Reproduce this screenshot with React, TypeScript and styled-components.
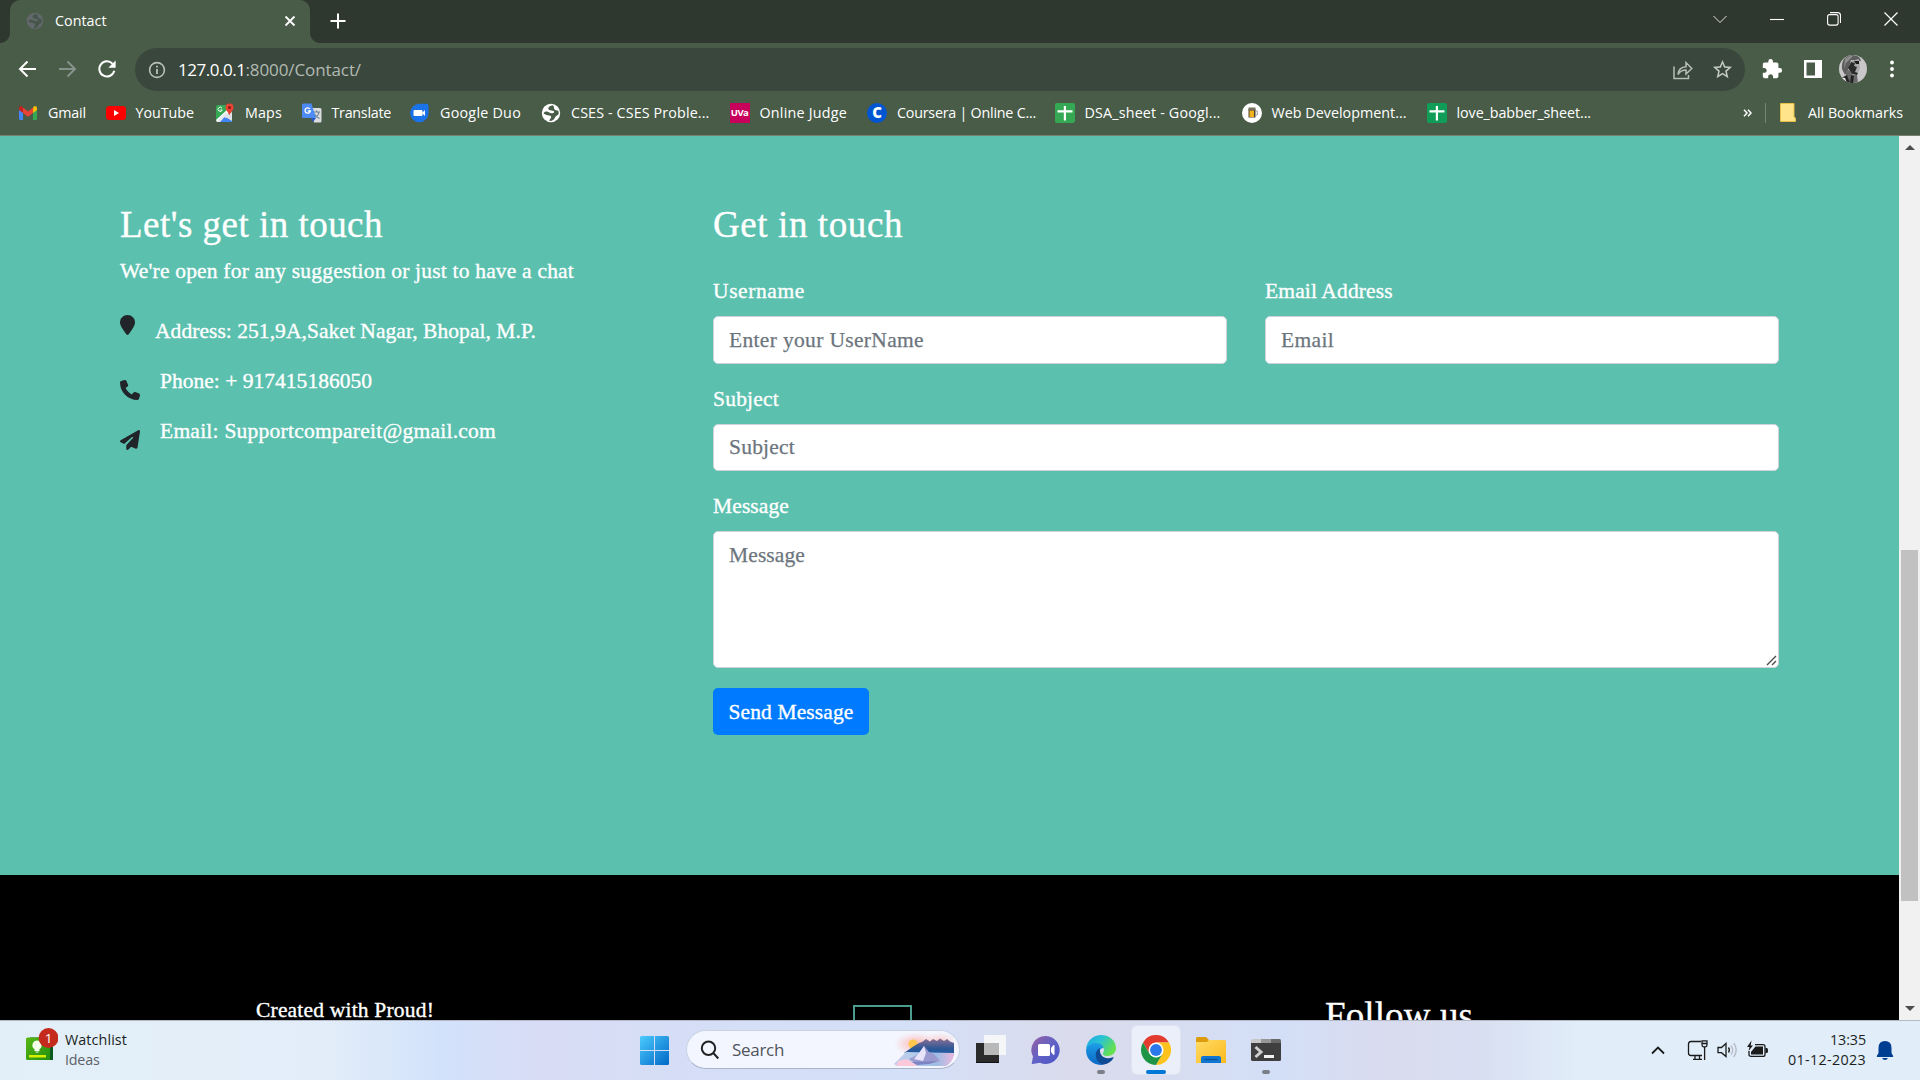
import React from 'react';
import styled, { createGlobalStyle } from 'styled-components';
import { FaLocationPin, FaPhone, FaPaperPlane } from 'react-icons/fa6';
import { MdStarBorder, MdExtension } from 'react-icons/md';

const UI = '"Open Sans", "Noto Sans", sans-serif';
const SERIF = '"Liberation Serif", serif';
const TEAL = '#5bc0ae';
const CHROME = '#495c48';

const Global = createGlobalStyle`
  * { box-sizing: border-box; }
  html, body { margin: 0; padding: 0; overflow: hidden; background: #000; }
  svg { display: block; flex: none; }
`;

/* Letter spacing that brings a run of text to a given width. */
const ctx = document.createElement('canvas').getContext('2d')!;
const spacing = (text: string, font: string, size: number, width: number) => {
  ctx.font = `${size}px ${font}`;
  return (width - ctx.measureText(text).width) / text.length;
};

const TextRun = styled.span<{ $size: number; $font: string; $color: string; $line: number }>`
  font-family: ${p => p.$font};
  font-size: ${p => p.$size}px;
  line-height: ${p => p.$line}px;
  color: ${p => p.$color};
  -webkit-text-stroke: ${p => (p.$font === SERIF ? '0.35px' : '0')} currentColor;
  white-space: pre;
  display: block;
`;

type RunProps = { children: string; w: number; size?: number; font?: string; color?: string; line?: number };
const Text = ({ children, w, size = 14.3, font = UI, color = '#fff', line = 20 }: RunProps) => (
  <TextRun
    $size={size}
    $font={font}
    $color={color}
    $line={line}
    style={{ letterSpacing: spacing(children, font, size, w) }}
  >
    {children}
  </TextRun>
);

const Screen = styled.div`
  width: 1920px;
  height: 1080px;
  display: flex;
  flex-direction: column;
  overflow: hidden;
`;

/* ---------- browser frame ---------- */
const TabStrip = styled.div`
  height: 43px;
  flex: none;
  background: #2f382f;
  display: flex;
`;
const Flare = styled.div<{ $side: 'left' | 'right' }>`
  width: 10px;
  background: radial-gradient(circle at ${p => (p.$side === 'left' ? '0' : '10px')} 33px, transparent 9.6px, ${CHROME} 10.2px) no-repeat 0 0;
  clip-path: inset(33px 0 0 0);
`;
const Tab = styled.div`
  width: 300px;
  background: ${CHROME};
  border-radius: 10px 10px 0 0;
  display: flex;
  align-items: center;
  padding: 0 14px 2px 16px;
  gap: 11px;
`;
const Grow = styled.div`
  flex: 1;
`;
const NewTab = styled.div`
  padding: 13px 0 0 10px;
`;
const WindowButtons = styled.div`
  display: flex;
  height: 37px;
  align-items: center;
  padding-right: 22px;
  gap: 43px;
`;
const Toolbar = styled.div`
  height: 53px;
  flex: none;
  background: ${CHROME};
  display: flex;
  align-items: center;
  padding: 0 20px 0 17px;
`;
const NavButtons = styled.div`
  display: flex;
  width: 118px;
  gap: 19px;
  align-items: center;
  padding-bottom: 2px;
`;
const UrlBar = styled.div`
  width: 1610px;
  height: 43px;
  border-radius: 22px;
  background: #3a473c;
  display: flex;
  align-items: center;
  padding: 0 9px 0 13px;
`;
const UrlText = styled.div`
  display: flex;
  padding-left: 12px;
`;
const ToolIcons = styled.div`
  display: flex;
  align-items: center;
  padding-left: 16px;
  padding-bottom: 1px;
`;
const Slot = styled.div<{ $w: number }>`
  width: ${p => p.$w}px;
  display: flex;
`;
const Bookmarks = styled.div`
  height: 40px;
  flex: none;
  background: ${CHROME};
  border-bottom: 1px solid #75806f;
  display: flex;
  padding-left: 18px;
  padding-bottom: 6px;
  align-items: center;
`;
const Bookmark = styled.div<{ $w: number }>`
  width: ${p => p.$w}px;
  display: flex;
  align-items: center;
  gap: 10px;
`;
const Divider = styled.div`
  width: 1px;
  height: 20px;
  background: #75866f;
  margin: 0 14px 0 13px;
`;
const UvaBadge = styled.div`
  width: 20px;
  height: 20px;
  background: #c8005c;
  color: #fff;
  font: bold 9.5px/20px ${UI};
  letter-spacing: -0.5px;
  text-align: center;
`;
const CourseraBadge = styled.div`
  width: 20px;
  height: 20px;
  border-radius: 50%;
  background: #0056d2;
  color: #fff;
  font: 800 15px/19px ${UI};
  text-align: center;
`;

/* ---------- page ---------- */
const Viewport = styled.div`
  height: 884px;
  flex: none;
  display: flex;
  overflow: hidden;
`;
const Page = styled.div`
  width: 1899px;
  height: 884px;
  overflow: hidden;
`;
const ContactSection = styled.section`
  height: 739px;
  background: ${TEAL};
  display: flex;
  padding: 68px 120px 0 120px;
`;
const Info = styled.div`
  width: 593px;
`;
const Heading = styled.div`
  height: 42px;
  margin-bottom: 10px;
`;
const InfoRow = styled.div<{ $gap: number; $drop: number }>`
  height: 50px;
  display: flex;
  align-items: flex-start;
  gap: ${p => p.$gap}px;
  color: #212529;
  > svg { margin-top: ${p => p.$drop}px; }
`;
const Intro = styled.div`
  margin-bottom: 30px;
`;
const Form = styled.form`
  flex: 1;
  display: flex;
  flex-direction: column;
  gap: 20px;
`;
const Pair = styled.div`
  display: grid;
  grid-template-columns: 1fr 1fr;
  gap: 38px;
`;
const Group = styled.label`
  display: flex;
  flex-direction: column;
  gap: 10px;
  position: relative;
`;
const fieldCss = `
  width: 100%;
  border: 1px solid #ced4da;
  border-radius: 5px;
  background: #fff;
  font: 21.5px/30px ${SERIF};
  padding: 8px 15px;
  outline: none;
  display: block;
  &::placeholder { color: #6c757d; opacity: 1; -webkit-text-stroke: 0.25px #6c757d; }
`;
const Input = styled.input<{ $nudge?: number }>`
  ${fieldCss}
  height: 47.5px;
  padding-top: ${p => 8 + (p.$nudge || 0)}px;
`;
const Area = styled.textarea`
  ${fieldCss}
  height: 137px;
  resize: none;
`;
const Grip = styled.svg`
  position: absolute;
  right: 1px;
  bottom: 1px;
`;
const Submit = styled.button`
  align-self: flex-start;
  width: 156px;
  height: 47px;
  border: 0;
  border-radius: 5px;
  background: #007bff;
  padding: 0;
  display: flex;
  align-items: center;
  justify-content: center;
`;
const Footer = styled.footer`
  height: 145px;
  background: #000;
  display: flex;
  align-items: flex-start;
`;
const FootCell = styled.div<{ $left: number; $top: number; $w: number }>`
  margin-left: ${p => p.$left}px;
  padding-top: ${p => p.$top}px;
  width: ${p => p.$w}px;
`;
const Frame = styled.div`
  height: 60px;
  border: 2px solid #4a9c8d;
`;
const Scrollbar = styled.div`
  width: 21px;
  background: #f1f1f1;
  display: flex;
  flex-direction: column;
  align-items: center;
`;
const Arrow = styled.div<{ $up?: boolean }>`
  width: 0;
  height: 0;
  border-left: 5px solid transparent;
  border-right: 5px solid transparent;
  ${p => (p.$up ? 'border-bottom' : 'border-top')}: 5px solid #4d4d4d;
  margin-top: ${p => (p.$up ? 9 : 105)}px;
`;
const Thumb = styled.div`
  margin-top: 400px;
  width: 17px;
  height: 351px;
  background: #c1c1c1;
`;

/* ---------- taskbar ---------- */
const Taskbar = styled.div`
  height: 60px;
  flex: none;
  border-top: 1px solid #b3bac6;
  background: linear-gradient(90deg, #e3eff8 0, #e2edf9 330px, #d3e2fb 440px, #d8dcf5 540px, #d5def6 680px, #d4e0f8 900px, #dadbec 1080px, #d3dff7 1280px, #d9dbee 1390px, #d8dff1 1480px, #e1edf9 1580px, #e1edf8 1920px);
  display: flex;
`;
const Widgets = styled.div`
  width: 640px;
  display: flex;
  padding: 5px 0 0 26px;
`;
const WidgetIcon = styled.div`
  width: 39px;
`;
const Lines = styled.div<{ $end?: boolean }>`
  display: flex;
  flex-direction: column;
  padding-top: ${p => (p.$end ? 9 : 4)}px;
  align-items: ${p => (p.$end ? 'flex-end' : 'flex-start')};
`;
const Dock = styled.div`
  display: flex;
  width: 1009px;
`;
const StartSlot = styled.div`
  width: 46px;
  padding-top: 15px;
`;
const Search = styled.div`
  width: 274px;
  height: 39px;
  margin: 9px 7px 0 0;
  border-radius: 20px;
  background: #f3f6fe;
  border: 1px solid #c9d3e6;
  border-bottom-color: #aab4c8;
  display: flex;
  align-items: center;
  gap: 12px;
  padding-left: 13px;
`;
const SearchArt = styled.div`
  margin-left: 98px;
`;
const DockApp = styled.div<{ $active?: boolean }>`
  width: 48px;
  height: 48px;
  margin: 5px 7px 0 0;
  border-radius: 5px;
  flex: none;
  display: flex;
  flex-direction: column;
  align-items: center;
  justify-content: flex-end;
  background: ${p => (p.$active ? '#ebeff9' : 'transparent')};
  box-shadow: ${p => (p.$active ? '0 0 0 1px #dfe3ef' : 'none')};
`;
const Mark = styled.div<{ $w: number; $c: string }>`
  width: ${p => p.$w}px;
  height: 4px;
  border-radius: 2px;
  margin-top: 5px;
  background: ${p => p.$c};
`;
const Tray = styled.div`
  flex: 1;
  display: flex;
`;
const TrayIcons = styled.div`
  width: 130px;
  display: flex;
  padding-top: 19px;
`;
const Clock = styled.div`
  width: 87px;
`;
const Bell = styled.div`
  padding: 19px 0 0 10px;
`;

/* ---------- drawings ---------- */
const Globe = ({ bg, fg, size = 18 }: { bg: string; fg: string; size?: number }) => (
  <svg width={size} height={size} viewBox="0 0 20 20">
    <circle cx="10" cy="10" r="9.2" fill={bg} />
    <path d="M12 2.200C9 2.500 7 4 7.300 5.800 7.700 7.500 10 7.500 12 7.800c1.700.3 1.600 2-.3 2.400-1.700.3-3-.6-4.500-1.200C5.500 8.200 3.500 8.400 2.500 10.500L5.500 12c1.500.6 4 0 4.600 1.500.6 1.700-1.600 2.200-1.700 4.500 2.600.3 4.600-1 5.600-3.400.6-1.500 2.500-2 3.500-3.300.4-1.300.3-2.600-.3-3.600-1.500-.4-3.300-.2-4-1.600C12.700 5 13.500 3.800 12 2.200Z" fill={fg} />
  </svg>
);
const Gmail = () => (
  <svg width="20" height="20" viewBox="0 0 20 20">
    <path d="M1 5v10.500q0 1.500 1.500 1.500H5V8Z" fill="#4285f4" />
    <path d="M19 5v10.500q0 1.500-1.500 1.500H15V8Z" fill="#34a853" />
    <path d="M15 5.200V10l4-3V5.300C19 3 17 2.500 15.600 3.600Z" fill="#fbbc04" />
    <path d="M5 5.200V10L1 7V5.300C1 3 3 2.500 4.400 3.600Z" fill="#c5221f" />
    <path d="M5 10V4.600l5 3.800 5-3.800V10l-5 3.800Z" fill="#ea4335" />
  </svg>
);
const YouTube = () => (
  <svg width="20" height="20" viewBox="0 0 20 20">
    <rect x="0" y="3" width="20" height="14" rx="3.500" fill="#f00" />
    <path d="m8 7 5 3-5 3Z" fill="#fff" />
  </svg>
);
const Maps = () => (
  <svg width="20" height="20" viewBox="0 0 20 20">
    <rect x="1" y="2" width="16" height="17" rx="2" fill="#34a853" />
    <path d="m2 19 8-8 7 7v1Z" fill="#4285f4" />
    <path d="M1 17 14 5l3 2L4 19H2Z" fill="#fff" />
    <path d="M1.500 18 11 9l3 3-7 7H3Z" fill="#e8eaed" />
    <path d="m9 13 8-4v9Z" fill="#dfe3e8" />
    <path d="m5 19 4.500-5 5.500 5Z" fill="#4285f4" />
    <path d="M7 5.200A2.100 2.100 0 1 0 7.200 7H5.300" stroke="#fff" strokeWidth="1" fill="none" />
    <path d="M14.500.5a4 4 0 0 0-4 4c0 3 3 4.500 4 8 1-3.500 4-5 4-8a4 4 0 0 0-4-4Z" fill="#ea4335" />
    <circle cx="14.500" cy="4.500" r="1.500" fill="#811c14" />
  </svg>
);
const Translate = () => (
  <svg width="20" height="20" viewBox="0 0 20 20">
    <path d="M8 5h10q1.500 0 1.500 1.500V18q0 1.500-1.500 1.500h-6Z" fill="#dadce0" />
    <path d="M11 9h7M14.500 7.500V9M17 9c-.5 3-2.500 5-5 6M12.500 11c1 2 2.500 3.500 5 4.500" stroke="#6b7f8e" strokeWidth="1.100" fill="none" />
    <path d="M1.500.5h8L14 15H1.500Q0 15 0 13.500V2Q0 .5 1.500.5Z" fill="#4c8bf5" />
    <path d="m9 15 5 0-3 4Z" fill="#2a56c6" />
    <path d="M8 6A2.700 2.700 0 1 0 8.400 8H5.800" stroke="#fff" strokeWidth="1.300" fill="none" />
  </svg>
);
const Duo = () => (
  <svg width="20" height="20" viewBox="0 0 20 20">
    <path d="M9.500.8h7q2 0 2 2V10a9.200 9.200 0 1 1-9-9.200Z" fill="#1a73e8" />
    <path d="M4.500 7h7q1 0 1 1v4q0 1-1 1h-7q-1 0-1-1V8q0-1 1-1Zm8 2.500L15 7v6l-2.500-2.500Z" fill="#fff" />
  </svg>
);
const Sheet = ({ c }: { c: string }) => (
  <svg width="20" height="20" viewBox="0 0 20 20">
    <rect width="20" height="20" rx="2" fill={c} />
    <path d="M9.900 3v14.500M2.500 8.300h15" stroke="#fff" strokeWidth="2.200" />
  </svg>
);
const Beer = () => (
  <svg width="20" height="20" viewBox="0 0 20 20">
    <circle cx="10" cy="10" r="10" fill="#fff" />
    <path d="M6.500 6h7v8.500h-7Z" fill="#4b4030" />
    <path d="M7.500 7.500h4.500v6.500H7.500Z" fill="#f2b21b" />
    <path d="M6.500 4.500h7v2.800h-7Z" fill="#77705f" />
    <path d="M13.500 8h1.800v4h-1.800" stroke="#999" fill="none" />
  </svg>
);
const Line = ({ d, w = 20, h = 20, c = '#fff', s = 2 }: { d: string; w?: number; h?: number; c?: string; s?: number }) => (
  <svg width={w} height={h} viewBox={`0 0 ${w} ${h}`} fill="none" stroke={c} strokeWidth={s}>
    <path d={d} />
  </svg>
);
const Avatar = () => (
  <svg width="28" height="28" viewBox="0 0 28 28">
    <clipPath id="av"><circle cx="14" cy="14" r="14" /></clipPath>
    <g clipPath="url(#av)">
      <path d="M0 0h28v28H0Z" fill="#c9c7c9" />
      <path d="M3 14Q2 1 13 0q8 0 9 6L12 5 9 15l-3 5Z" fill="#5d5d5d" />
      <path d="M12 6 20 4l1 9-2 5-6 1-3-5Z" fill="#a9a9a9" />
      <path d="m12 7 4 1-1 3 3 1-2 5 3 1-1 2-5-1-4-6Z" fill="#2b2b2b" />
      <path d="M15 6h5v3h-3Z" fill="#1c1c1c" />
      <path d="M7 16 10 15l4 5 4 0 1 8H7Z" fill="#6a6a6a" />
      <path d="m12 20 3 1-1 7h-3ZM0 24l8-4 3 8H0Z" fill="#242424" />
      <path d="m0 22 6 1 2 5H0Z" fill="#efefef" />
      <path d="M6 4q4-4 8-3L7 8 5 14Z" fill="#8d8d8d" />
    </g>
  </svg>
);
const WatchIcon = () => (
  <svg width="32" height="38" viewBox="0 0 32 38">
    <defs>
      <linearGradient id="wg" x2="1" y2="1"><stop stopColor="#58b811" /><stop offset="1" stopColor="#218f12" /></linearGradient>
    </defs>
    <path d="M4 11.500h23V34H4Z" fill="#0b5a1f" />
    <path d="M1.500 11.500H24V34H1.500Q0 34 0 32.500V13q0-1.500 1.500-1.500Z" fill="url(#wg)" />
    <path d="M3 29h17v2.500H3Z" fill="#d4f000" />
    <path d="M11 14.500a4.700 4.700 0 0 0-2.500 8.600V25h5v-1.900A4.700 4.700 0 0 0 11 14.500Z" fill="#f4ffe9" />
    <path d="M9.500 26h3.200" stroke="#f4ffe9" />
    <circle cx="22.500" cy="12" r="9.900" fill="#c42b1c" />
    <text x="22.500" y="17" textAnchor="middle" fontFamily="Open Sans, sans-serif" fontSize="13.500" fill="#fff">1</text>
  </svg>
);
const StartIcon = () => (
  <svg width="30" height="30" viewBox="0 0 30 30">
    <defs><linearGradient id="win" x2="1" y2="1"><stop stopColor="#4ccbff" /><stop offset="1" stopColor="#0067c5" /></linearGradient></defs>
    <path d="M1.500 0H14v14H0V1.500Q0 0 1.500 0ZM15 0h12.500Q29 0 29 1.500V14H15ZM0 15h14v14H1.500Q0 29 0 27.500ZM15 15h14v12.500q0 1.500-1.500 1.500H15Z" fill="url(#win)" />
  </svg>
);
const Art = () => (
  <svg width="61" height="36" viewBox="0 0 61 36">
    <defs>
      <linearGradient id="mt" x2="0" y2="1"><stop stopColor="#8c6f92" /><stop offset=".6" stopColor="#2c5796" /><stop offset="1" stopColor="#1e5fa8" /></linearGradient>
      <linearGradient id="wt" x2="1"><stop stopColor="#c8c9ec" /><stop offset=".3" stopColor="#b4cdea" /><stop offset=".7" stopColor="#9dbde4" /><stop offset="1" stopColor="#efb8de" /></linearGradient>
      <radialGradient id="gl"><stop stopColor="#ffb09a" /><stop offset="1" stopColor="#ffc3d0" stopOpacity="0" /></radialGradient>
      <clipPath id="ac"><path d="M0 0h60v22q-1 8-8 12H0Z" /></clipPath>
    </defs>
    <g clipPath="url(#ac)">
      <ellipse cx="22" cy="12" rx="22" ry="12" fill="url(#gl)" />
      <ellipse cx="46" cy="9" rx="18" ry="9" fill="url(#gl)" opacity=".6" />
      <circle cx="19" cy="12" r="4.500" fill="#ffc84c" />
      <path d="M10 21 20 14l5-3 3-1 4-3 4 2.500 3-2.500 4 2 3-2.500 4 2.500 3-2 3 2.500 5 2v12Z" fill="url(#mt)" />
      <path d="M0 32 12 20l49 1v15H6Z" fill="url(#wt)" />
      <path d="m4 29 9-2 12 8H2Z" fill="#fbc9da" />
      <path d="m15 27 8-4 3-2 4-7 5 6 5 2 6 7-10 3H22Z" fill="#9c9bcf" />
      <path d="m25 21 5-7 2 7-3 8-9-2Z" fill="#e8e5fa" />
      <path d="m18 30 25-1-8 3-12 1Z" fill="#7d84c2" />
    </g>
  </svg>
);
const TaskView = () => (
  <svg width="30" height="30" viewBox="0 0 30 30">
    <path d="M0 8h23v20H0Z" fill="#2b2b2b" />
    <path d="M0 27h23v1H0Z" fill="#111" />
    <path d="M8 0h22v20H8Z" fill="#f7f7f7" fillOpacity=".95" />
    <path d="M8 8h15v12H8Z" fill="#b9b9b9" />
  </svg>
);
const Chat = () => (
  <svg width="30" height="30" viewBox="0 0 30 30">
    <defs><linearGradient id="ch" x1="0" x2="1" y2="1"><stop stopColor="#9a5f9f" /><stop offset=".5" stopColor="#6162c6" /><stop offset="1" stopColor="#4c55c4" /></linearGradient></defs>
    <path d="M15 1a14 14 0 1 1-6 26.800L1.500 29q-1 0-.7-1L2 21.500A14 14 0 0 1 15 1Z" fill="url(#ch)" />
    <rect x="7" y="9" width="12" height="12" rx="1.500" fill="#fff" />
    <path d="m20 13 2-2.500q1.500-1 1.500.5v8q0 1.500-1.500.5L20 17Z" fill="#fff" />
  </svg>
);
const Edge = () => (
  <svg width="30" height="30" viewBox="0 0 30 30">
    <defs>
      <linearGradient id="e1" x2="1" y2=".5"><stop stopColor="#1ca7e8" /><stop offset=".5" stopColor="#2bc3d2" /><stop offset="1" stopColor="#66e04e" /></linearGradient>
      <linearGradient id="e2" x2="0" y2="1"><stop stopColor="#1ea0e8" /><stop offset="1" stopColor="#0b66c4" /></linearGradient>
    </defs>
    <path d="M0 14C1 5 8 0 15 0c9 0 15 6 15 13 0 5-4 8-8.500 8-3.500 0-5.500-1.500-4.500-3 3-4-1-8.500-6-9C6 9 2 11 0 14Z" fill="url(#e1)" />
    <path d="M0 15c1-5 6-7 10-7 4.500 0 7.500 3 7.500 5-6 0-8 12 .5 16.500-9 2-18-4-18-14.500Z" fill="url(#e2)" />
    <path d="M14 13c-7 3-5 15 4 16.600 4-.8 7.500-3 9.500-6.600.4-.8-.2-1-.8-.7-7 3-14-1-12.700-9.300Z" fill="#0f4a94" />
  </svg>
);
const ChromeLogo = () => (
  <svg width="30" height="30" viewBox="0 0 30 30">
    <path d="M2 7.500A15 15 0 0 1 28 7.500H15L8.500 18.700Z" fill="#e33b2e" />
    <path d="M28 7.500A15 15 0 0 1 14.900 30L21.500 18.700 21 11 15 7.500Z" fill="#fcc31e" />
    <path d="M2 7.500A15 15 0 0 0 14.900 30l6.600-11.300L15 22.500l-6.500-3.800Z" fill="#1f9447" />
    <circle cx="15" cy="15" r="7.500" fill="#fff" />
    <circle cx="15" cy="15" r="5.900" fill="#2a78e9" />
  </svg>
);
const Folder = () => (
  <svg width="30" height="30" viewBox="0 0 30 30">
    <defs><linearGradient id="fo" x2="1" y2="1"><stop stopColor="#ffdc66" /><stop offset="1" stopColor="#fcb91d" /></linearGradient></defs>
    <path d="M1.500 2H10l3 3-2 4H0V3.500Q0 2 1.500 2Z" fill="#dd9c0b" />
    <path d="M0 7h11l2-2h15.500Q30 5 30 6.500V28H0Z" fill="url(#fo)" />
    <path d="M5 28v-5q0-2 2-2h16q2 0 2 2v5Z" fill="#1076cf" />
    <path d="M8.500 24.500h13" stroke="#0a4f9a" strokeWidth="1.200" />
  </svg>
);
const Terminal = () => (
  <svg width="30" height="30" viewBox="0 0 30 30">
    <path d="M0 8h30v16.500q0 1.500-1.500 1.500h-27Q0 26 0 24.500Z" fill="#3f3f3f" />
    <path d="M0 8V5.500Q0 4 1.500 4H10v4Z" fill="#c8c8c8" />
    <path d="M10 4h10v4H10Z" fill="#979797" />
    <path d="M20 4h8.500Q30 4 30 5.500V8H20Z" fill="#686868" />
    <path d="m4.500 12 5.500 5-5.500 5" stroke="#cfcfcf" strokeWidth="3" fill="none" />
    <path d="M13 21.500h10" stroke="#f2f2f2" strokeWidth="3" />
  </svg>
);

const bookmarks: [React.ReactNode, string, number, number][] = [
  [<Gmail />, 'Gmail', 38, 87.5],
  [<YouTube />, 'YouTube', 58.5, 109.5],
  [<Maps />, 'Maps', 37, 86.5],
  [<Translate />, 'Translate', 59.5, 108.5],
  [<Duo />, 'Google Duo', 81, 131],
  [<Globe bg="#fff" fg={CHROME} size={20} />, 'CSES - CSES Proble...', 138.5, 188.5],
  [<UvaBadge>UVa</UvaBadge>, 'Online Judge', 87.5, 137.5],
  [<CourseraBadge>C</CourseraBadge>, 'Coursera | Online C...', 139, 187.5],
  [<Sheet c="#34a853" />, 'DSA_sheet - Googl...', 136, 187],
  [<Beer />, 'Web Development...', 135, 185],
  [<Sheet c="#0f9d58" />, 'love_babber_sheet...', 134.5, 299],
];

const Serif = (p: RunProps) => <Text size={21.5} font={SERIF} line={30} {...p} />;
const Title = (p: RunProps) => <Text size={37} font={SERIF} line={42} {...p} />;
const ph = (t: string, w: number) => ({ placeholder: t, style: { letterSpacing: spacing(t, SERIF, 21.5, w) } });

export default function App() {
  return (
    <Screen>
      <Global />
      <TabStrip>
        <Flare $side="left" />
        <Tab>
          <Globe bg="#62676b" fg="#46564a" />
          <Text w={51.5}>Contact</Text>
          <Grow />
          <Line w={12} h={12} d="m1.500 1.500 9 9m0-9-9 9" s={1.800} />
        </Tab>
        <Flare $side="right" />
        <NewTab><Line w={16} h={16} d="M8 .5v15M.5 8h15" s={2} /></NewTab>
        <Grow />
        <WindowButtons>
          <Line w={14} h={14} d="m.5 4 6.500 6.500L13.500 4" s={1} c="#dfe3df" />
          <Line w={14} h={14} d="M0 7.500h14" s={1.100} />
          <svg width="14" height="14" viewBox="0 0 14 14" fill="none" stroke="#fff" strokeWidth="1.100">
            <rect x=".6" y="2.600" width="10.500" height="10.500" rx="2" />
            <path d="M3 .6h7.500q3 0 3 3V11" />
          </svg>
          <Line w={14} h={14} d="m.5.5 13 13m0-13-13 13" s={1.200} />
        </WindowButtons>
      </TabStrip>
      <Toolbar>
        <NavButtons>
          <Line w={21} h={20} d="M19 10H3.500M10.500 2.500 3 10l7.500 7.500" />
          <Line w={21} h={20} d="M2 10h15.500M10.500 2.500 18 10l-7.500 7.500" c="#87938a" />
          <svg width="20" height="20" viewBox="0 0 20 20">
            <path d="M17.300 11.800A7.600 7.600 0 1 1 15.600 4.800" fill="none" stroke="#fff" strokeWidth="2" />
            <path d="M18.600 1.500v7.300h-7.300Z" fill="#fff" />
          </svg>
        </NavButtons>
        <UrlBar>
          <svg width="18" height="18" viewBox="0 0 18 18" fill="none" stroke="#b9c0ba">
            <circle cx="9" cy="9" r="7.400" strokeWidth="1.600" />
            <path d="M9 8v5M9 4.800v1.800" strokeWidth="1.800" />
          </svg>
          <UrlText>
            <Text w={67.5} size={17} line={24}>127.0.0.1</Text>
            <Text w={115.5} size={17} line={24} color="#b3bab3">:8000/Contact/</Text>
          </UrlText>
          <Grow />
          <Slot $w={38}>
            <svg width="20" height="20" viewBox="0 0 20 20" fill="none" stroke="#b5bdb6" strokeWidth="1.500">
              <path d="M1 6.500V18.500H15.500V15" />
              <path d="M5 14.500c.5-5 3.500-7.500 8-7.700V2.500L18.800 8.500 13 14v-4c-3.500 0-6 1.200-8 4.500Z" />
            </svg>
          </Slot>
          <Slot $w={25}><MdStarBorder size={23} color="#c3c9c3" /></Slot>
        </UrlBar>
        <ToolIcons>
          <Slot $w={43}><MdExtension size={22} color="#fff" /></Slot>
          <Slot $w={35}>
            <svg width="18" height="18" viewBox="0 0 18 18">
              <path fillRule="evenodd" d="M0 0h18v18H0ZM2.500 2.500v13H11v-13Z" fill="#fff" />
            </svg>
          </Slot>
          <Slot $w={50}><Avatar /></Slot>
          <svg width="6" height="18" viewBox="0 0 6 18" fill="#fff">
            <circle cx="3" cy="2.500" r="1.900" /><circle cx="3" cy="9" r="1.900" /><circle cx="3" cy="15.500" r="1.900" />
          </svg>
        </ToolIcons>
      </Toolbar>
      <Bookmarks>
        {bookmarks.map(([icon, label, w, cell]) => (
          <Bookmark key={label} $w={cell}>{icon}<Text w={w}>{label}</Text></Bookmark>
        ))}
        <Grow />
        <Line w={9} h={8} d="m1 .7 3 3.300-3 3.300M5 .7l3 3.300-3 3.300" s={1.500} />
        <Divider />
        <Bookmark $w={140}>
          <svg width="18" height="19" viewBox="0 0 18 19">
            <path d="M.5.5H14V14l1.500 1v3.500H.5Z" fill="#ffe48c" stroke="#e8bf45" />
          </svg>
          <Text w={95}>All Bookmarks</Text>
        </Bookmark>
      </Bookmarks>

      <Viewport>
        <Page>
          <ContactSection>
            <Info>
              <Heading><Title w={263}>Let's get in touch</Title></Heading>
              <Intro><Serif w={454}>We're open for any suggestion or just to have a chat</Serif></Intro>
              <InfoRow $gap={20} $drop={-1}>
                <FaLocationPin style={{ width: 15, height: 20 }} />
                <Serif w={381}>Address: 251,9A,Saket Nagar, Bhopal, M.P.</Serif>
              </InfoRow>
              <InfoRow $gap={20} $drop={14}>
                <FaPhone size={20} />
                <Serif w={212}>Phone: + 917415186050</Serif>
              </InfoRow>
              <InfoRow $gap={20} $drop={14}>
                <FaPaperPlane size={20} />
                <Serif w={336}>Email: Supportcompareit@gmail.com</Serif>
              </InfoRow>
            </Info>
            <Form>
              <Heading><Title w={190}>Get in touch</Title></Heading>
              <Pair>
                <Group><Serif w={92}>Username</Serif><Input $nudge={1} {...ph('Enter your UserName', 195)} /></Group>
                <Group><Serif w={129}>Email Address</Serif><Input $nudge={1} {...ph('Email', 53)} /></Group>
              </Pair>
              <Group><Serif w={66}>Subject</Serif><Input {...ph('Subject', 66)} /></Group>
              <Group>
                <Serif w={76}>Message</Serif>
                <Area {...ph('Message', 76)} />
                <Grip width="12" height="12" viewBox="0 0 12 12" stroke="#4a4a4a" strokeWidth="1.400">
                  <path d="m1 10 9-9M6 10l4-4" />
                </Grip>
              </Group>
              <Submit type="button"><Serif w={125}>Send Message</Serif></Submit>
            </Form>
          </ContactSection>
          <Footer>
            <FootCell $left={256} $top={120} $w={180}><Serif w={178}>Created with Proud!</Serif></FootCell>
            <FootCell $left={417} $top={130} $w={59}><Frame /></FootCell>
            <FootCell $left={413} $top={120} $w={160}><Title w={148}>Follow us</Title></FootCell>
          </Footer>
        </Page>
        <Scrollbar>
          <Arrow $up />
          <Thumb />
          <Arrow />
        </Scrollbar>
      </Viewport>

      <Taskbar>
        <Widgets>
          <WidgetIcon><WatchIcon /></WidgetIcon>
          <Lines>
            <Text w={62} color="#1b1f24">Watchlist</Text>
            <Text w={34.5} color="#5c6268">Ideas</Text>
          </Lines>
        </Widgets>
        <Dock>
          <StartSlot><StartIcon /></StartSlot>
          <Search>
            <Line w={20} h={20} d="M8.500 1.500a6.700 6.700 0 1 0 0 13.400 6.700 6.700 0 0 0 0-13.400ZM13.300 13l5 5.500" c="#222" s={2} />
            <Text w={52} size={17} color="#50555c" line={24}>Search</Text>
            <SearchArt><Art /></SearchArt>
          </Search>
          <DockApp><TaskView /><Mark $w={8} $c="transparent" /></DockApp>
          <DockApp><Chat /><Mark $w={8} $c="transparent" /></DockApp>
          <DockApp><Edge /><Mark $w={8} $c="#7b7f88" /></DockApp>
          <DockApp $active><ChromeLogo /><Mark $w={20} $c="#0078d7" /></DockApp>
          <DockApp><Folder /><Mark $w={8} $c="transparent" /></DockApp>
          <DockApp><Terminal /><Mark $w={8} $c="#7b7f88" /></DockApp>
        </Dock>
        <Tray>
          <TrayIcons>
            <Slot $w={38}><Line w={18} h={20} d="m3 13.500 6-6 6 6" s={1.800} c="#1b1b1b" /></Slot>
            <Slot $w={30}>
              <svg width="22" height="21" viewBox="0 0 22 21" fill="none" stroke="#1b1b1b" strokeWidth="1.300">
                <path d="M14 1.500H4q-2.500 0-2.500 2.500v9q0 2.500 2.500 2.500h11M6 19.300h9M8 15.500v3.500M12.500 15.500v3.500" />
                <path d="M15 .8h5v4q0 2-1.500 2h-2q-1.500 0-1.500-2ZM15 3.500h5M17.600 7v13" />
              </svg>
            </Slot>
            <Slot $w={30}>
              <svg width="22" height="20" viewBox="0 0 22 20" fill="none" stroke="#1b1b1b" strokeWidth="1.300">
                <path d="M1 7.500h3.500L9 3.500v13L4.500 12.700H1Z" />
                <path d="M11.500 7.500q1.800 2.500 0 5" />
                <path d="M14 5.500q3.500 4.500 0 9M16.700 3q5 7 0 14" stroke="#b3bac4" />
              </svg>
            </Slot>
            <Slot $w={25}>
              <svg width="22" height="20" viewBox="0 0 22 20">
                <path d="M8 4.600h8q2 0 2 2v7.800q0 2-2 2H4q-2 0-2-2V11" fill="none" stroke="#1b1b1b" strokeWidth="1.300" />
                <path d="M8.500 6.500h7.500v8H4V12Z" fill="#1b1b1b" />
                <path d="M18.500 8h1.500q1 0 1 2.500t-1 2.500h-1.500Z" fill="#1b1b1b" />
                <path d="M4.500.5 0 7h2.500L1.500 11 6 5.500H3.700Z" fill="#1b1b1b" />
              </svg>
            </Slot>
          </TrayIcons>
          <Clock>
            <Lines $end>
              <Text w={36} color="#1b1f24">13:35</Text>
              <Text w={78} color="#1b1f24">01-12-2023</Text>
            </Lines>
          </Clock>
          <Bell>
            <svg width="18" height="21" viewBox="0 0 18 21" fill="#003e92">
              <path d="M9 1Q2.500 1 2.500 8v5L.8 16q-.3 1 .7 1h15q1 0 .7-1l-1.700-3V8Q15.500 1 9 1ZM6 18h6q-1 2-3 2t-3-2Z" />
            </svg>
          </Bell>
        </Tray>
      </Taskbar>
    </Screen>
  );
}
